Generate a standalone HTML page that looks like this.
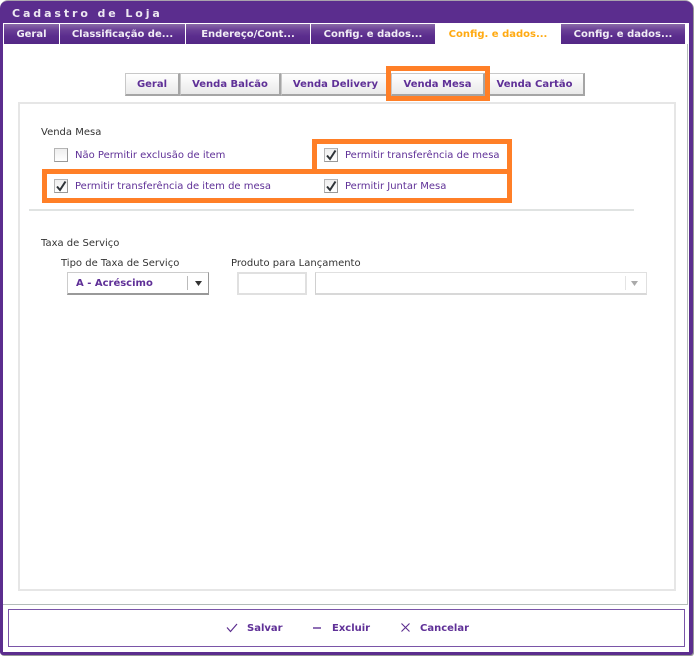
<!DOCTYPE html>
<html>
<head>
<meta charset="utf-8">
<style>
html,body{margin:0;padding:0;background:#fff}
body{width:694px;height:656px;position:relative;overflow:hidden;font-family:"DejaVu Sans","Liberation Sans",sans-serif;font-size:10px;color:#333}
.a{position:absolute;box-sizing:border-box}
.t{position:absolute;white-space:nowrap;line-height:12px}
.tab{position:absolute;top:24px;height:20px;background:linear-gradient(#8a6aa8 0,#6a3f96 30%,#5b2d8e 60%,#542886 100%);color:#f1edf5;font-weight:bold;font-size:10px;line-height:21px;text-align:center;white-space:nowrap}
.btn{position:absolute;top:73px;height:23px;box-sizing:border-box;background:linear-gradient(#fff,#e9e9e9);border:1px solid #c8c8c8;border-right:2px solid #a5a5a5;border-bottom:2px solid #a5a5a5;color:#5f3097;font-weight:bold;font-size:10px;line-height:22px;text-align:center;white-space:nowrap}
.o{position:absolute;box-sizing:border-box;border:5px solid #ff7f27}
.cb{position:absolute;width:14px;height:14px;box-sizing:border-box;background:linear-gradient(#eee,#fff);border:1px solid #b5b5b5;border-right-color:#999;border-bottom-color:#999}
.p{color:#5f3097}
</style>
</head>
<body>
<div class="a" style="left:0;top:0;width:693px;height:655px;background:#5b2d8e;border-radius:8px 8px 3px 3px;border-top:1px solid #a9a3ad;box-shadow:1px 1px 0 #999"></div>
<div class="a" style="left:3px;top:23px;width:686px;height:629px;background:#fff"></div>
<div class="a" style="left:687px;top:44px;width:1px;height:561px;background:#b4bcba"></div>
<div class="a" style="left:3px;top:604px;width:685px;height:1px;background:#b4bcba"></div>

<div class="t" style="left:12px;top:8px;font-weight:bold;font-size:11px;letter-spacing:2.9px;color:#ede8f2">Cadastro de Loja</div>

<div class="tab" style="left:4px;width:55px">Geral</div>
<div class="tab" style="left:60px;width:125px">Classificação de...</div>
<div class="tab" style="left:186px;width:124px">Endereço/Cont...</div>
<div class="tab" style="left:311px;width:124px">Config. e dados...</div>
<div class="tab" style="left:435px;width:126px;background:#fff;color:#ffaa12">Config. e dados...</div>
<div class="tab" style="left:561px;width:124px">Config. e dados...</div>

<div class="btn" style="left:125px;width:55px">Geral</div>
<div class="btn" style="left:180px;width:101px">Venda Balcão</div>
<div class="btn" style="left:281px;width:110px">Venda Delivery</div>
<div class="btn" style="left:391px;width:94px">Venda Mesa</div>
<div class="btn" style="left:485px;width:100px">Venda Cartão</div>

<div class="a" style="left:18px;top:102px;width:658px;height:489px;border:2px solid #e6e6e6;background:#fff"></div>

<div class="o" style="left:386px;top:66px;width:104px;height:35px"></div>
<div class="o" style="left:312px;top:139px;width:200px;height:35px"></div>
<div class="o" style="left:42px;top:169px;width:470px;height:34px"></div>

<div class="t" style="left:41px;top:127px">Venda Mesa</div>

<div class="cb" style="left:54px;top:148px"></div>
<div class="t p" style="left:75px;top:150px">Não Permitir exclusão de item</div>

<div class="cb" style="left:324px;top:148px"></div>
<svg class="a" style="left:324px;top:148px" width="14" height="14"><path d="M3 7.5 L6 11 L11.5 2.5" fill="none" stroke="#2e3338" stroke-width="2"/></svg>
<div class="t p" style="left:345px;top:150px">Permitir transferência de mesa</div>

<div class="cb" style="left:54px;top:179px"></div>
<svg class="a" style="left:54px;top:179px" width="14" height="14"><path d="M3 7.5 L6 11 L11.5 2.5" fill="none" stroke="#2e3338" stroke-width="2"/></svg>
<div class="t p" style="left:75px;top:181px">Permitir transferência de item de mesa</div>

<div class="cb" style="left:324px;top:179px"></div>
<svg class="a" style="left:324px;top:179px" width="14" height="14"><path d="M3 7.5 L6 11 L11.5 2.5" fill="none" stroke="#2e3338" stroke-width="2"/></svg>
<div class="t p" style="left:345px;top:181px">Permitir Juntar Mesa</div>

<div class="a" style="left:29px;top:209px;width:605px;height:2px;background:#e0e3e2"></div>

<div class="t" style="left:41px;top:238px">Taxa de Serviço</div>
<div class="t" style="left:61px;top:258px">Tipo de Taxa de Serviço</div>
<div class="t" style="left:231px;top:258px">Produto para Lançamento</div>

<div class="a" style="left:67px;top:272px;width:142px;height:23px;border:1px solid #ccc;border-right-color:#999;border-bottom:2px solid #999;background:#fff"></div>
<div class="t p" style="left:76px;top:278px;font-weight:bold;font-size:10px">A - Acréscimo</div>
<div class="a" style="left:187px;top:276px;width:1px;height:14px;background:#bbb"></div>
<svg class="a" style="left:195px;top:281px" width="8" height="6"><path d="M0 0 H7 L3.5 5 Z" fill="#333"/></svg>

<div class="a" style="left:237px;top:272px;width:70px;height:23px;border:2px solid #e0e0e0;background:#fff"></div>
<div class="a" style="left:315px;top:272px;width:332px;height:23px;border:1px solid #e0e0e0;border-left:1px solid #d0d0d0;border-bottom:2px solid #d8d8d8;background:#fff"></div>
<div class="a" style="left:625px;top:276px;width:1px;height:14px;background:#e4e4e4"></div>
<svg class="a" style="left:631px;top:281px" width="9" height="6"><path d="M0 0 H7 L3.5 5 Z" fill="#aaa"/></svg>

<div class="a" style="left:8px;top:609px;width:677px;height:38px;border:1px solid #7a55a8;background:#fff"></div>
<svg class="a" style="left:226px;top:622px" width="12" height="11"><path d="M1 5.5 L4.5 9.5 L11 2" fill="none" stroke="#5b2d8e" stroke-width="1.2"/></svg>
<div class="t p" style="left:247px;top:623px;font-weight:bold;font-size:10px">Salvar</div>
<div class="a" style="left:313px;top:627px;width:8px;height:2px;background:#8f6fb5"></div>
<div class="t p" style="left:332px;top:623px;font-weight:bold;font-size:10px">Excluir</div>
<svg class="a" style="left:400px;top:622px" width="11" height="11"><path d="M1.5 1.5 L9.5 9.5 M9.5 1.5 L1.5 9.5" fill="none" stroke="#5b2d8e" stroke-width="1.1"/></svg>
<div class="t p" style="left:420px;top:623px;font-weight:bold;font-size:10px">Cancelar</div>
</body>
</html>
